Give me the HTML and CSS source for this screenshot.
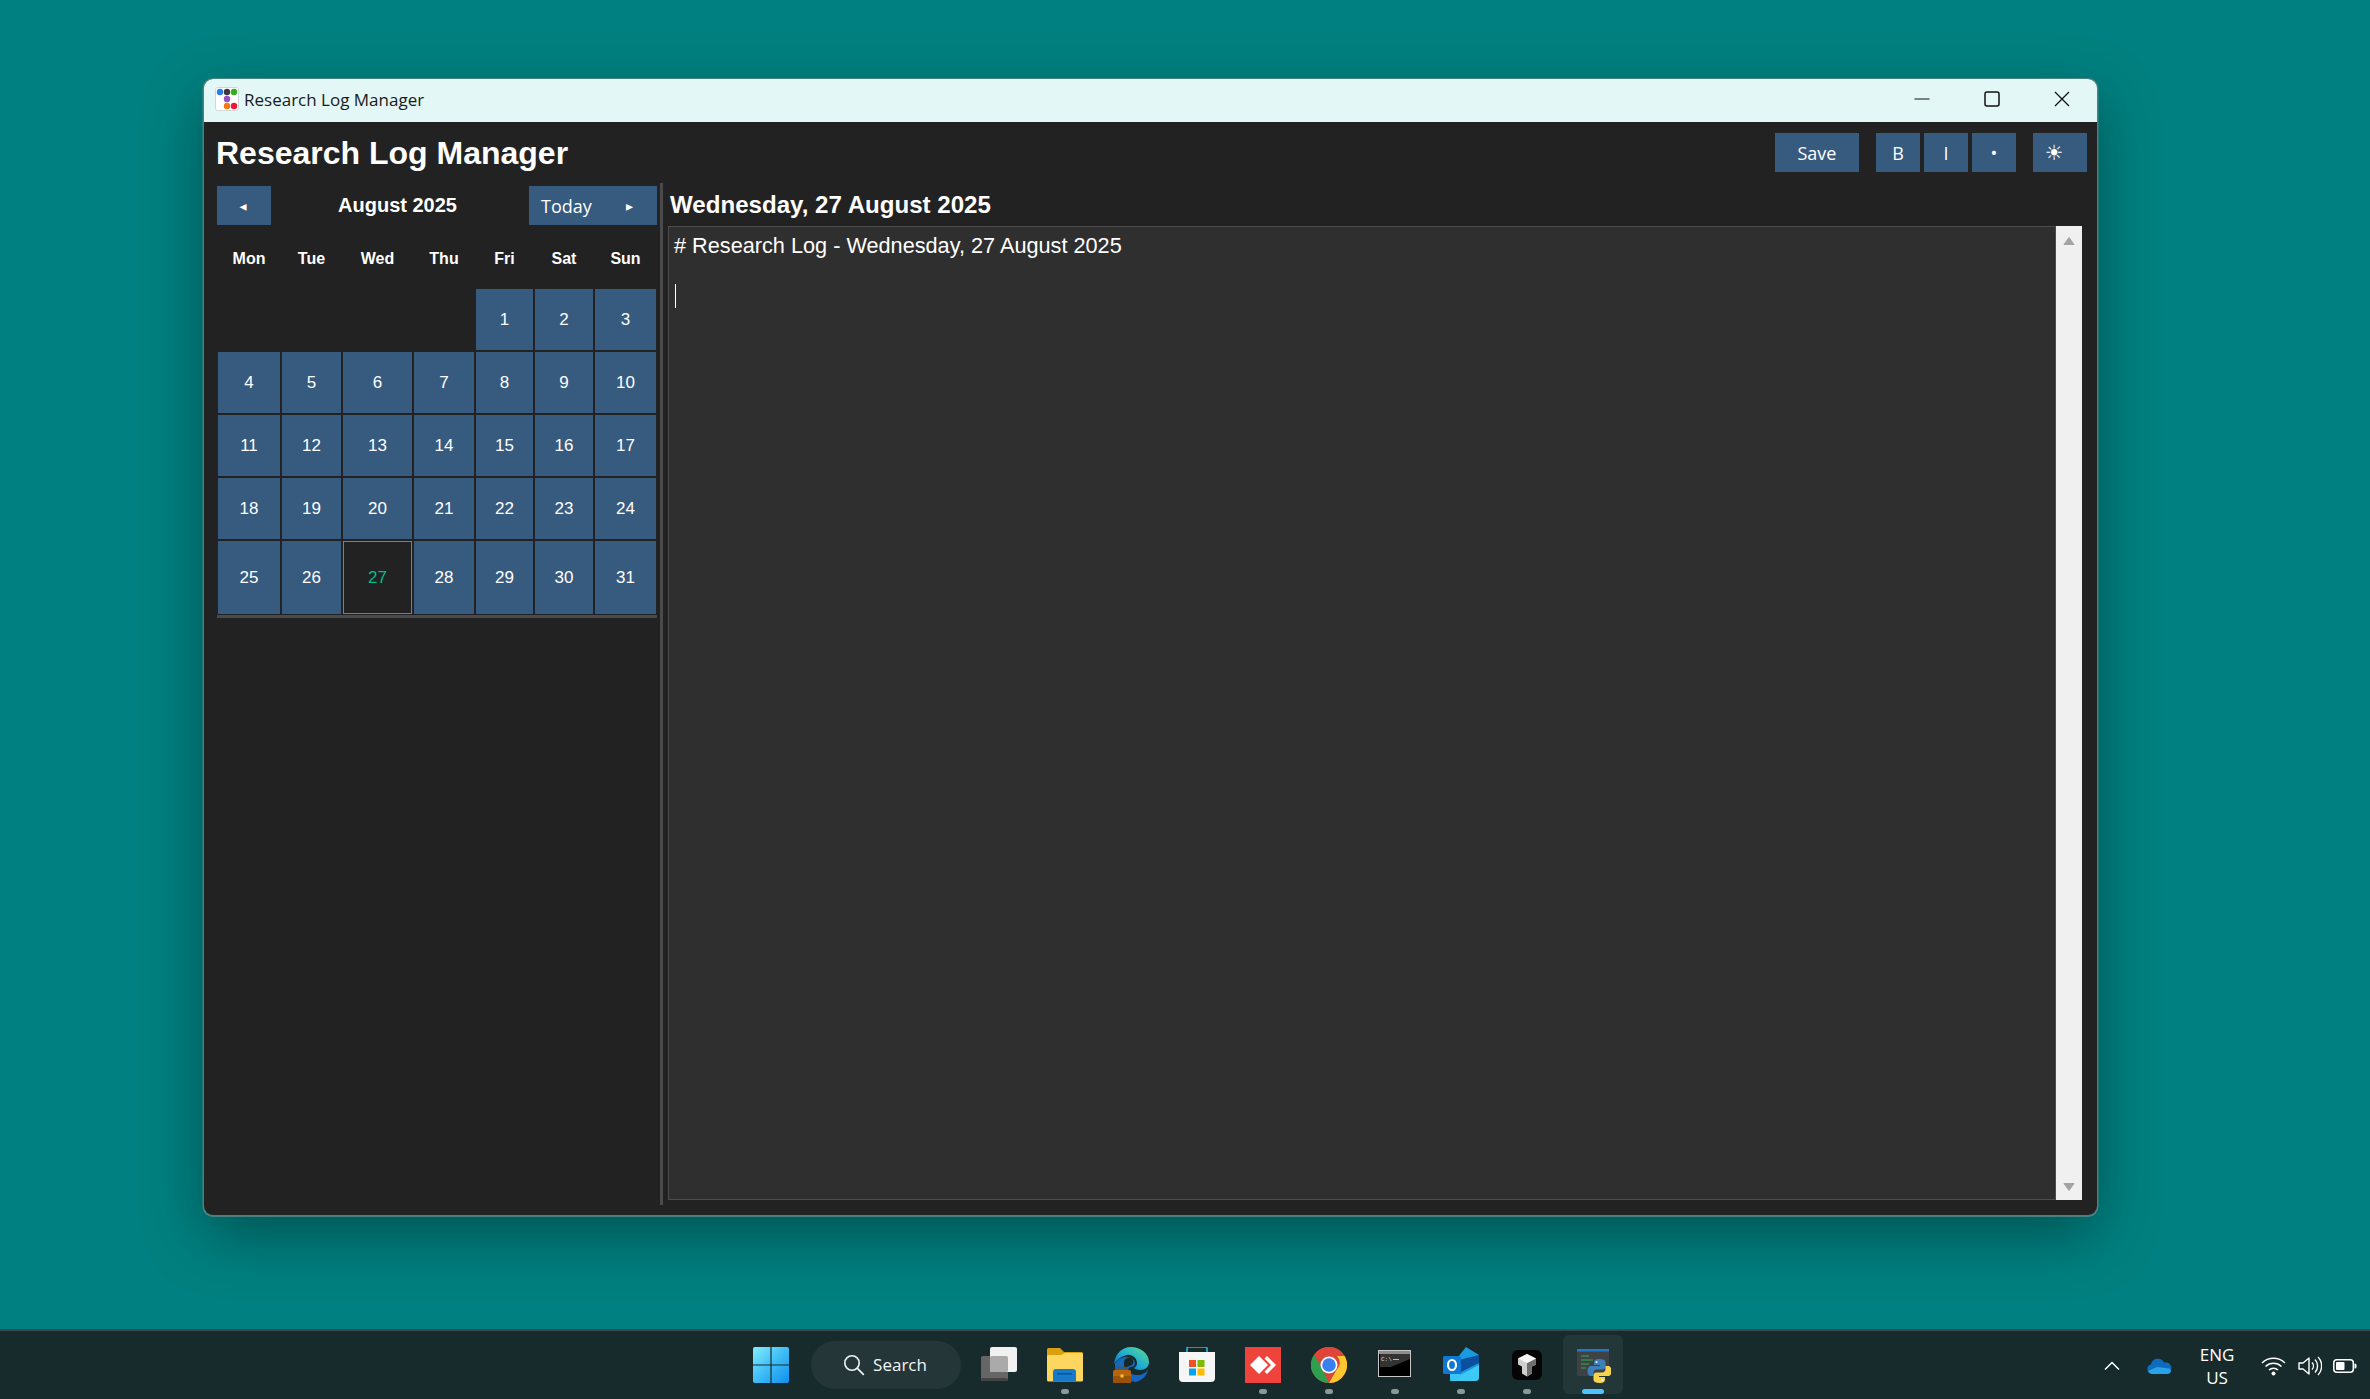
FILE: index.html
```html
<!DOCTYPE html>
<html lang="en">
<head>
<meta charset="utf-8">
<title>Research Log Manager</title>
<link rel="stylesheet" href="styles.css">
</head>
<body>
<main class="desktop">
  <section class="window">
    <header class="titlebar">
      <svg class="app-icon" viewBox="0 0 24 24"><rect x=".5" y=".5" width="23" height="23" rx="2" fill="#fff" stroke="#cfd8d8"/><circle cx="5" cy="5" r="3.200" fill="#2b7de9"/><circle cx="12" cy="5" r="3.200" fill="#3a3a3a"/><circle cx="19" cy="5" r="3.200" fill="#2fae1f"/><circle cx="12" cy="12" r="3.200" fill="#9a4fc0"/><circle cx="12" cy="19" r="3.200" fill="#f47a12"/><circle cx="19" cy="19" r="3.200" fill="#f01838"/></svg>
      <span class="window-name">Research Log Manager</span>
      <div class="controls">
        <span class="control"><svg width="16" height="16" viewBox="0 0 16 16"><path d="M.5 8h15" stroke="#111" stroke-width="1.2"/></svg></span>
        <span class="control"><svg width="16" height="16" viewBox="0 0 16 16"><rect x="1" y="1" width="14" height="14" rx="2" fill="none" stroke="#111" stroke-width="1.5"/></svg></span>
        <span class="control"><svg width="16" height="16" viewBox="0 0 16 16"><path d="M1 1l14 14M15 1L1 15" stroke="#111" stroke-width="1.3"/></svg></span>
      </div>
    </header>
    <div class="appbar">
      <h1 class="app-title">Research Log Manager</h1>
      <div class="actions">
        <button class="btn btn-save">Save</button>
        <div class="format-group">
          <button class="btn btn-format">B</button>
          <button class="btn btn-format">I</button>
          <button class="btn btn-format">•</button>
        </div>
        <button class="btn btn-theme"><span class="sun">☀</span></button>
      </div>
    </div>
    <div class="workspace">
      <aside class="calendar">
        <div class="cal-nav">
          <button class="btn btn-prev"><span class="arrow">◂</span></button>
          <span class="month">August 2025</span>
          <button class="btn btn-today"><span>Today</span><span class="arrow">▸</span></button>
        </div>
        <div class="cal-grid">
          <div class="wd">Mon</div><div class="wd">Tue</div><div class="wd">Wed</div><div class="wd">Thu</div><div class="wd">Fri</div><div class="wd">Sat</div><div class="wd">Sun</div>
          <div></div><div></div><div></div><div></div><div class="day">1</div><div class="day">2</div><div class="day">3</div>
          <div class="day">4</div><div class="day">5</div><div class="day">6</div><div class="day">7</div><div class="day">8</div><div class="day">9</div><div class="day">10</div>
          <div class="day">11</div><div class="day">12</div><div class="day">13</div><div class="day">14</div><div class="day">15</div><div class="day">16</div><div class="day">17</div>
          <div class="day">18</div><div class="day">19</div><div class="day">20</div><div class="day">21</div><div class="day">22</div><div class="day">23</div><div class="day">24</div>
          <div class="day">25</div><div class="day">26</div><div class="day today">27</div><div class="day">28</div><div class="day">29</div><div class="day">30</div><div class="day">31</div>
        </div>
        <div class="cal-rule"></div>
      </aside>
      <div class="sash"></div>
      <section class="log">
        <h2 class="log-date">Wednesday, 27 August 2025</h2>
        <div class="log-body">
          <div class="editor">
            <p class="editor-line"># Research Log - Wednesday, 27 August 2025</p>
            <p class="editor-line">&nbsp;</p>
            <div class="caret"></div>
          </div>
          <div class="scrollbar">
            <svg width="12" height="10" viewBox="0 0 12 10"><path d="M6 1.500l5 7H1z" fill="#a3a3a3" stroke="#a3a3a3" stroke-linejoin="round"/></svg>
            <svg width="12" height="10" viewBox="0 0 12 10"><path d="M1 1.500h10l-5 7z" fill="#a3a3a3" stroke="#a3a3a3" stroke-linejoin="round"/></svg>
          </div>
        </div>
      </section>
    </div>
  </section>
</main>
<footer class="taskbar">
  <div class="task-center">
    <div class="slot">
      <svg class="ti" viewBox="0 0 36 36"><defs><linearGradient id="win" x1="0" y1="0" x2="1" y2="1"><stop offset="0" stop-color="#86ecff"/><stop offset=".5" stop-color="#3fbdf5"/><stop offset="1" stop-color="#0f8ff0"/></linearGradient></defs><path fill="url(#win)" d="M2 0h15.400v17.400H0V2a2 2 0 0 1 2-2zM18.600 0H34a2 2 0 0 1 2 2v15.400H18.600zM0 18.600h17.400V36H2a2 2 0 0 1-2-2zM18.600 18.600H36V34a2 2 0 0 1-2 2H18.600z"/></svg>
    </div>
    <div class="search">
      <svg width="22" height="22" viewBox="0 0 22 22"><circle cx="9" cy="9" r="7.200" fill="none" stroke="#f2f5f5" stroke-width="1.600"/><path d="M14.200 14.200l6.600 6.600" stroke="#f2f5f5" stroke-width="1.700"/></svg>
      <span>Search</span>
    </div>
    <div class="slot">
      <svg class="ti" viewBox="0 0 36 36"><rect x="0" y="9" width="27" height="25" rx="2" fill="#666"/><rect x="0" y="31" width="27" height="3" rx="1.500" fill="#444"/><rect x="9" y="0" width="27" height="25" rx="2" fill="#f1f1f1"/><rect x="9" y="9" width="18" height="16" rx="1.500" fill="#aaa"/></svg>
    </div>
    <div class="slot">
      <svg class="ti" viewBox="0 0 36 36"><path d="M0 2.500A1.500 1.500 0 0 1 1.500 1H13l4 4h17.500A1.500 1.500 0 0 1 36 6.500V12H0z" fill="#d9a00f"/><path d="M0 9.500A1.500 1.500 0 0 1 1.500 8H14l4-2h16.500A1.500 1.500 0 0 1 36 7.500V33a1.500 1.500 0 0 1-1.500 1.500h-33A1.500 1.500 0 0 1 0 33z" fill="#fdd65f"/><path d="M6 34.500V25a3 3 0 0 1 3-3h17a3 3 0 0 1 3 3v9.500z" fill="#1779c9"/><rect x="10" y="26" width="15" height="1.500" fill="#0d508c"/></svg>
      <i class="dot"></i>
    </div>
    <div class="slot">
      <svg class="ti" viewBox="0 0 36 36"><defs><linearGradient id="edgeA" x1="0" y1="1" x2="1" y2="0"><stop offset="0" stop-color="#0b62b8"/><stop offset=".45" stop-color="#1ba9d8"/><stop offset="1" stop-color="#5fe08a"/></linearGradient></defs><path d="M1 17C2 7 9 0 18 0c10 0 18 7 18 15 0 5-4 8-9 8-3 0-5-1-6-2 2-1 3-3 3-5 0-5-5-9-10-8C9 9 4 12 1 17z" fill="url(#edgeA)"/><path d="M2 16c3-4 7-6 11-6 5 0 9 3 9 6 0 2-1 4-4 4-2 0-3 2-3 4 0 4 3 8 7 9-2 1-4 2-6 2-5 0-11-3-13-9-1-3-1-7-1-10z" fill="#1768b8"/><path d="M15 22c1 4 5 6 9 6 5 0 9-2 11-6-1 7-6 12-13 13-3-1-7-5-7-13z" fill="#1566c0"/><path d="M11 14a5 5 0 0 1 9-1c1 2 0 4-1 5-3 1-6 2-6 4l-2-2z" fill="#15292b"/><rect x="0" y="23" width="18" height="13" rx="1.500" fill="#b8640f"/><rect x="0" y="29" width="18" height="7" rx="1.500" fill="#9a5207"/><path d="M5 23v-2.500h8V23" fill="none" stroke="#7d4a10" stroke-width="1.400"/><rect x="7.500" y="27.500" width="3" height="3" fill="#f7c63d"/></svg>
    </div>
    <div class="slot">
      <svg class="ti" viewBox="0 0 36 36"><path d="M8 5V1.500A1.500 1.500 0 0 1 9.500 0h17A1.500 1.500 0 0 1 28 1.500V5" fill="none" stroke="#29b6f0" stroke-width="1.600"/><path d="M0 5h36v26a4 4 0 0 1-4 4H4a4 4 0 0 1-4-4z" fill="#f6f6f6"/><rect x="10" y="13" width="7" height="7" fill="#f25022"/><rect x="18.500" y="13" width="7" height="7" fill="#7fba00"/><rect x="10" y="21.500" width="7" height="7" fill="#00a4ef"/><rect x="18.500" y="21.500" width="7" height="7" fill="#ffb900"/></svg>
    </div>
    <div class="slot">
      <svg class="ti" viewBox="0 0 36 36"><rect width="36" height="36" fill="#ef443b"/><path d="M14 9l9 9-9 9-9-9z" fill="#fff"/><path d="M22 9l9 9-9 9-2.500-2.500L26 18l-6.500-6.500z" fill="#fff"/></svg>
      <i class="dot"></i>
    </div>
    <div class="slot">
      <svg class="ti" viewBox="0 0 36 36"><circle cx="18" cy="18" r="18" fill="#db4437"/><path d="M18 0a18 18 0 0 1 15.600 9H18a9 9 0 0 0-8.500 6L3.200 7.700A18 18 0 0 1 18 0z" fill="#e0453a"/><path d="M3.200 7.700L10.500 20 18 36A18 18 0 0 1 3.200 7.700z" fill="#2f9e4f"/><path d="M33.600 9A18 18 0 0 1 18 36l7.800-13.500a9 9 0 0 0 0-13.500z" fill="#fcc72e"/><circle cx="18" cy="18" r="8.500" fill="#fff"/><circle cx="18" cy="18" r="6.800" fill="#3a7ff0"/></svg>
      <i class="dot"></i>
    </div>
    <div class="slot">
      <svg class="ti" viewBox="0 0 36 36"><rect x="1" y="3" width="33" height="27" fill="#c8c8c8"/><rect x="2" y="4" width="31" height="3" fill="#8d8d8d"/><rect x="2" y="7" width="31" height="22" fill="#000"/><path d="M3 7h30v5L14 20H3z" fill="#fff" opacity=".2"/><text class="cmd-text" x="4" y="13.500">C:\</text><rect x="16" y="12" width="6" height="1" fill="#bbb"/></svg>
      <i class="dot"></i>
    </div>
    <div class="slot">
      <svg class="ti" viewBox="0 0 36 36"><path d="M7 20L23 0l13 8v22a4 4 0 0 1-4 4H10a3 3 0 0 1-3-3z" fill="#1a9adf"/><path d="M16 13l20-5v8L16 26z" fill="#0b4f9e"/><path d="M6 34l30-16v12a4 4 0 0 1-4 4z" fill="#3ccaf5"/><path d="M10 34a3 3 0 0 1-3-3V20l13 9z" fill="#38c5f2"/><rect x="0" y="9" width="18" height="18" rx="1.500" fill="#0f78d4"/><ellipse cx="9" cy="18" rx="4" ry="5" fill="none" stroke="#fff" stroke-width="2.200"/></svg>
      <i class="dot"></i>
    </div>
    <div class="slot">
      <svg class="ti ti-unity" viewBox="0 0 30 30"><rect width="30" height="30" rx="6" fill="#050505"/><path d="M15 4l9 4.500v6l-4 2v7l-5 3-5-3v-7l-4-2v-6z" fill="#cfcfcf"/><path d="M15 13l9-4.500v6l-4 2v7l-5 3z" fill="#6f6f6f"/><path d="M15 4l9 4.500-9 4.500-9-4.500z" fill="#f5f5f5"/></svg>
      <i class="dot"></i>
    </div>
    <div class="slot slot-active">
      <svg class="ti" viewBox="0 0 36 36"><rect x="2" y="2" width="32" height="27" fill="#3f4244"/><rect x="2" y="2" width="32" height="2.500" fill="#1f78c8"/><path d="M6 9h8M6 13h12M6 17h8M6 21h5" stroke="#2fae4f" stroke-width="1.200"/><g transform="translate(12.500 12)"><path d="M12 0C7 0 6.500 2 6.500 3.500V6h6v1H3.500C1.500 7 0 8.500 0 12s1.500 5 3.500 5H6v-3c0-2 1.500-3.500 3.500-3.500h5.500c1.500 0 3-1 3-3V3.500C18 1.500 16 0 12 0z" fill="#3d80b8"/><path d="M12 0C7 0 6.500 2 6.500 3.500V6h6v1H3.500C1.500 7 0 8.500 0 12s1.500 5 3.500 5H6v-3c0-2 1.500-3.500 3.500-3.500h5.500c1.500 0 3-1 3-3V3.500C18 1.500 16 0 12 0z" fill="#f8d44c" transform="rotate(180 12 12)"/><circle cx="9" cy="3" r="1.100" fill="#e8f0f5"/><circle cx="15" cy="21" r="1.100" fill="#fff"/></g></svg>
      <i class="dot dot-active"></i>
    </div>
  </div>
  <div class="tray">
    <svg class="tray-chev" width="16" height="10" viewBox="0 0 16 10"><path d="M1 8.500l7-7 7 7" fill="none" stroke="#fff" stroke-width="1.500"/></svg>
    <svg class="tray-cloud" width="25" height="16" viewBox="0 0 25 16"><path d="M5 16a5 5 0 0 1-1-9.800A7 7 0 0 1 17 4.500a5.500 5.500 0 0 1 3 11.500z" fill="#0f6cbd"/><path d="M5 16a4.500 4.500 0 0 1-4-3l9-4 12 1.500a4 4 0 0 1 2 2.500 4 4 0 0 1-4 3z" fill="#29a3e8"/></svg>
    <div class="lang"><span>ENG</span><span>US</span></div>
    <svg class="tray-wifi" width="25" height="20" viewBox="0 0 25 20"><g fill="none" stroke="#fff" stroke-width="1.500"><path d="M1 7a16.500 16.500 0 0 1 23 0"/><path d="M4.500 10.500a11.500 11.500 0 0 1 16 0"/><path d="M8 14a6.500 6.500 0 0 1 9 0"/></g><circle cx="12.500" cy="17.500" r="2" fill="#fff"/></svg>
    <svg class="tray-vol" width="24" height="20" viewBox="0 0 24 20"><g fill="none" stroke="#fff" stroke-width="1.400" stroke-linejoin="round"><path d="M1 7h4l6-5v16l-6-5H1z"/><path d="M14 6.500a5 5 0 0 1 0 7"/><path d="M17 3.500a9.500 9.500 0 0 1 0 13"/><path d="M20 1a13 13 0 0 1 0 18"/></g></svg>
    <svg width="24" height="14" viewBox="0 0 24 14"><rect x=".8" y=".8" width="19.500" height="12.400" rx="3" fill="none" stroke="#fff" stroke-width="1.500"/><rect x="3" y="3" width="8.500" height="8" rx="1" fill="#fff"/><path d="M21.500 4.500h.5a1.500 1.500 0 0 1 1.500 1.500v2a1.500 1.500 0 0 1-1.500 1.500h-.5z" fill="#fff"/></svg>
  </div>
</footer>
</body>
</html>
```

FILE: styles.css
```css
* { box-sizing: border-box; }
html, body { margin: 0; height: 100%; }
body {
  width: 2370px;
  height: 1399px;
  overflow: hidden;
  display: flex;
  flex-direction: column;
  background: #008080;
  font-family: "Liberation Sans", Arial, sans-serif;
  color: #fff;
}
button { font: inherit; color: inherit; border: 0; padding: 0; }
.desktop { flex: 1; padding: 79px 0 0 204px; }
.window {
  width: 1893px;
  height: 1136px;
  display: flex;
  flex-direction: column;
  background: #222;
  border-radius: 9px;
  overflow: hidden;
  box-shadow: 0 .5px 0 1.5px rgba(90, 135, 135, .8), 0 20px 60px rgba(0, 0, 0, .36);
}
.titlebar {
  height: 43px;
  flex: none;
  display: flex;
  align-items: center;
  background: #e4f7f7;
  padding: 0 0 3px 11px;
  color: #1a1a1a;
}
.app-icon { width: 24px; height: 24px; }
.window-name { font: 17px "Open Sans", sans-serif; margin-left: 5px; }
.controls { margin-left: auto; display: flex; }
.control { width: 70px; height: 40px; display: flex; align-items: center; justify-content: center; }
.appbar {
  height: 61px;
  flex: none;
  display: flex;
  justify-content: space-between;
  padding: 11px 10px 0 13px;
}
.app-title { margin: 0 0 0 -1px; font-size: 32px; font-weight: 700; line-height: 41px; }
.actions { display: flex; height: 39px; }
.btn {
  display: flex;
  align-items: center;
  justify-content: center;
  height: 39px;
  background: #375a7f;
  font-family: "Open Sans", sans-serif;
  font-size: 18px;
}
.btn-save { width: 84px; margin-right: 17px; }
.format-group { display: flex; gap: 4px; margin-right: 17px; }
.btn-format { width: 44px; }
.btn-theme { width: 54px; padding-right: 12px; }
.sun { font: 21px "DejaVu Sans", sans-serif; }
.workspace { flex: 1; min-height: 0; display: flex; padding: 0 15px 10px 13px; }
.calendar { width: 440px; flex: none; padding-top: 3px; }
.cal-nav { display: flex; align-items: center; height: 39px; }
.btn-prev { width: 54px; padding-right: 2px; }
.arrow { font: 14px "DejaVu Sans", sans-serif; }
.month { flex: 1; text-align: center; padding-right: 5px; font-size: 20px; font-weight: 700; }
.btn-today { width: 128px; justify-content: space-between; padding: 1px 24px 0 12px; }
.cal-grid {
  display: grid;
  margin-left: 1px;
  grid-template-columns: 62px 59px 69px 60px 57px 58px 61px;
  grid-template-rows: 62px 61px 61px 61px 61px 73px;
  column-gap: 2px;
  row-gap: 2px;
}
.wd { display: flex; align-items: center; justify-content: center; font-size: 16px; font-weight: 700; padding-top: 5px; }
.day { display: flex; align-items: center; justify-content: center; background: #375a7f; font-size: 17px; padding-top: 1px; }
.today { background: #222; border: 1px solid #00bc8c; color: #00bc8c; }
.cal-rule { height: 3px; margin-top: 1px; background: #4a4a4a; }
.sash { width: 3px; flex: none; margin-left: 3px; background: #4a4a4a; }
.log { flex: 1; min-width: 0; display: flex; flex-direction: column; margin-left: 5px; }
.log-date { margin: 0 0 0 2px; height: 43px; font-size: 24.1px; line-height: 44px; font-weight: 700; }
.log-body { flex: 1; min-height: 0; display: flex; margin-bottom: 5px; }
.editor { flex: 1; background: #2f2f2f; border: 1px solid #4d4d4d; padding: 6px 5px; }
.editor-line { margin: 0; font-size: 21.7px; line-height: 25px; }
.caret { width: 1px; height: 24px; margin: 1px 0 0 1px; background: #fff; }
.scrollbar {
  width: 26px;
  flex: none;
  display: flex;
  flex-direction: column;
  justify-content: space-between;
  align-items: center;
  padding: 10px 0 8px;
  background: #f0f0f0;
}
.taskbar {
  height: 70px;
  flex: none;
  display: flex;
  background: #172b2c;
  border-top: 2px solid #3c4a4b;
}
.task-center { display: flex; align-items: center; gap: 6px; margin-left: 741px; height: 68px; padding-bottom: 1px; }
.slot { width: 60px; height: 59px; position: relative; display: flex; align-items: center; justify-content: center; border-radius: 6px; }
.slot-active { background: rgba(255, 255, 255, .06); }
.ti { width: 36px; height: 36px; }
.ti-unity { width: 30px; height: 30px; }
.cmd-text { font: 6px "Liberation Mono", monospace; fill: #ddd; }
.dot { position: absolute; left: 26px; bottom: 0; width: 8px; height: 5px; border-radius: 3px; background: #8b9898; }
.dot-active { left: 19px; width: 22px; background: #4cc2ff; }
.search {
  width: 150px;
  height: 48px;
  margin: 0 2px 0 4px;
  display: flex;
  align-items: center;
  justify-content: center;
  gap: 8px;
  padding-right: 2px;
  border-radius: 24px;
  background: #243638;
  font: 17px "Open Sans", sans-serif;
  color: #f2f5f5;
}
.tray { margin-left: auto; display: flex; align-items: center; height: 68px; padding: 1px 13px 0 0; }
.tray-chev { margin-right: 27px; }
.tray-cloud { margin-right: 15px; }
.lang { width: 60px; display: flex; flex-direction: column; align-items: center; font: 17px/23px "Open Sans", sans-serif; margin-right: 14px; }
.tray-wifi { margin-right: 12px; }
.tray-vol { margin-right: 11px; }
```
